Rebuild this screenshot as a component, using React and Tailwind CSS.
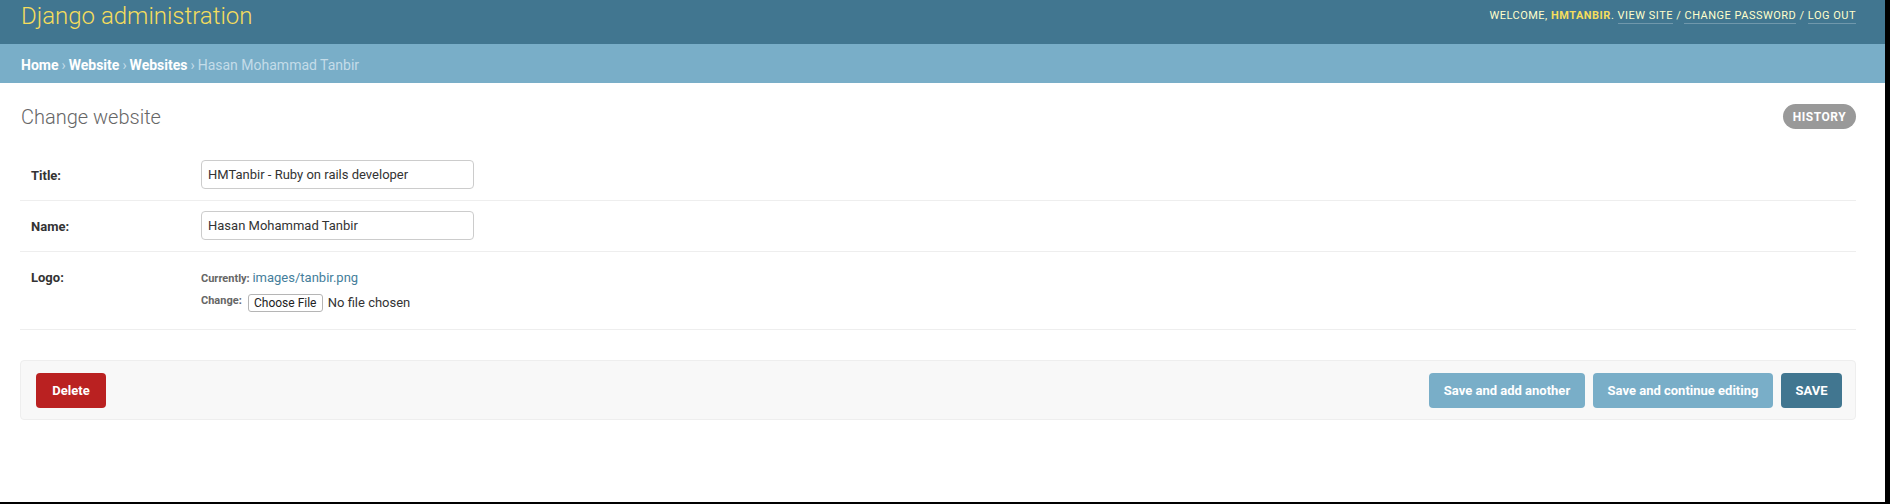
import React from "react";

const font = { fontFamily: "Roboto, 'Liberation Sans', sans-serif" };

function Row({ label, children, last }) {
  return (
    <div className={`flex border-b border-[#eeeeee] pl-[11px] pt-[10px] ${last ? "pb-[10px]" : "pb-[11px]"}`}>
      <label className="w-[170px] shrink-0 pt-[6px] text-[13px] font-bold leading-[20px] text-[#333333]">{label}</label>
      <div>{children}</div>
    </div>
  );
}

function TextInput({ value }) {
  return (
    <input
      readOnly
      value={value}
      className="h-[29px] w-[273px] rounded-[4px] border border-[#cccccc] bg-white px-[6px] text-[13px] text-[#333333] outline-none"
      style={font}
    />
  );
}

export default function App() {
  return (
    <div className="flex h-[504px] w-[1890px] bg-black" style={font}>
      <div className="h-[502px] w-[1885px] shrink-0 bg-white">
        <header className="flex h-[44px] items-start justify-between bg-[#417690] pl-[21px] pr-[29px]">
          <h1 className="mt-[2px] text-[24px] font-light leading-[28px] text-[#f5dd5d]">Django administration</h1>
          <div className="mt-[9px] text-[11px] uppercase leading-[14px] tracking-[0.5px] text-[#ffffcc]">
            Welcome, <strong className="font-bold text-[#f5dd5d]">hmtanbir</strong>.{" "}
            <a className="border-b border-white/25 pb-[1px]">View site</a> /{" "}
            <a className="border-b border-white/25 pb-[1px]">Change password</a> /{" "}
            <a className="border-b border-white/25 pb-[1px]">Log out</a>
          </div>
        </header>

        <nav className="flex h-[39px] items-center bg-[#79aec8] pl-[21px] pt-[2px] text-[14px] leading-[16px] text-[#c4dce8]">
          <a className="font-bold text-white">Home</a>
          <span className="px-[3px]">›</span>
          <a className="font-bold text-white">Website</a>
          <span className="px-[3px]">›</span>
          <a className="font-bold text-white">Websites</a>
          <span className="px-[3px]">›</span>
          <span>Hasan Mohammad Tanbir</span>
        </nav>

        <main className="pl-[20px] pr-[29px] pt-[21px]">
          <div className="flex items-start justify-between">
            <h2 className="ml-[1px] mt-[1px] text-[20px] font-light leading-[24px] text-[#666666]">Change website</h2>
            <button className="h-[25px] w-[73px] rounded-full bg-[#999999] text-[12px] font-bold uppercase tracking-[0.5px] text-white">
              History
            </button>
          </div>

          <div className="mt-[21px]">
            <Row label="Title:">
              <TextInput value="HMTanbir - Ruby on rails developer" />
            </Row>
            <Row label="Name:">
              <TextInput value="Hasan Mohammad Tanbir" />
            </Row>
            <Row label="Logo:" last>
              <div className="pt-[6px] pb-[4px] text-[#666666]">
                <p className="text-[11px] leading-[20px]">
                  <span className="font-bold">Currently:</span>{" "}
                  <a className="text-[13px] text-[#447e9b]">images/tanbir.png</a>
                </p>
                <div className="mt-[2px] flex h-[24px] items-center">
                  <span className="mb-[3px] mr-[6px] text-[11px] font-bold">Change:</span>
                  <button className="h-[18px] w-[75px] rounded-[3px] border border-[#b5b5b5] bg-white text-[12px] leading-[16px] text-[#222222]">
                    Choose File
                  </button>
                  <span className="ml-[5px] text-[13px] text-[#333333]">No file chosen</span>
                </div>
              </div>
            </Row>
          </div>

          <div className="mt-[30px] flex items-center justify-between rounded-[4px] border border-[#eeeeee] bg-[#f8f8f8] pb-[11px] pl-[15px] pr-[13px] pt-[12px]">
            <button className="h-[35px] w-[70px] rounded-[4px] bg-[#ba2121] text-[13px] font-bold text-white">Delete</button>
            <div className="flex gap-[8px]">
              <button className="h-[35px] w-[156px] rounded-[4px] bg-[#79aec8] text-[13px] font-bold text-white">Save and add another</button>
              <button className="h-[35px] w-[180px] rounded-[4px] bg-[#79aec8] text-[13px] font-bold text-white">Save and continue editing</button>
              <button className="h-[35px] w-[61px] rounded-[4px] bg-[#417690] text-[13px] font-bold uppercase text-white">Save</button>
            </div>
          </div>
        </main>
      </div>
    </div>
  );
}
